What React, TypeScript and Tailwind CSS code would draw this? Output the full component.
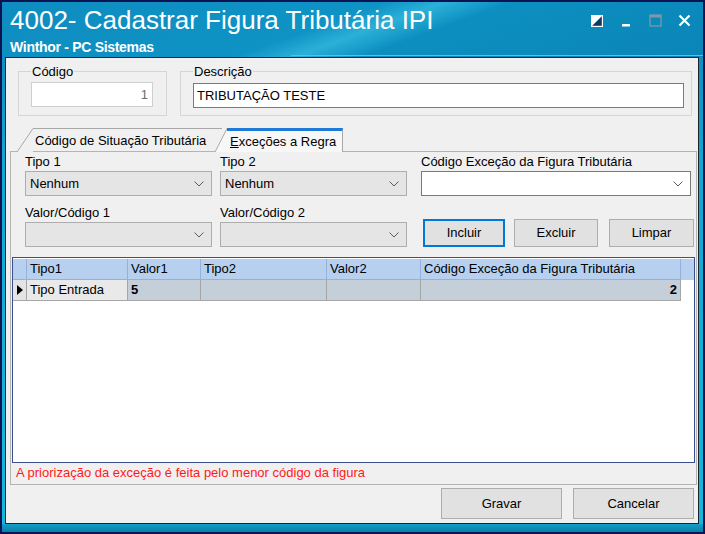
import React from "react";

const COLS = "grid grid-cols-[14px_101px_73px_126px_94px_260px]";

function Chevron() {
  return (
    <svg width="10" height="6" viewBox="0 0 10 6" className="shrink-0">
      <path d="M0.5 0.5 L5 5 L9.5 0.5" fill="none" stroke="#5a5a5a" strokeWidth="1" />
    </svg>
  );
}

function Combo({ value, white }: { value?: string; white?: boolean }) {
  return (
    <div
      className={
        white
          ? "h-[25px] flex items-center justify-between border border-[#7a7a7a] bg-white pl-[4px] pr-[7px]"
          : "h-[25px] flex items-center justify-between border border-[#adadad] bg-[#e5e5e5] pl-[4px] pr-[7px]"
      }
    >
      <span className="text-[13px] text-black">{value}</span>
      <Chevron />
    </div>
  );
}

function Field({ label, children }: { label: string; children: React.ReactNode }) {
  return (
    <div className="flex flex-col">
      <span className="text-[13px] leading-[15px] text-black mb-[2px]">{label}</span>
      {children}
    </div>
  );
}

function WinButton({ label, focused, className }: { label: React.ReactNode; focused?: boolean; className: string }) {
  return (
    <div
      className={
        (focused
          ? "border-2 border-[#0078d7] "
          : "border border-[#adadad] ") +
        "bg-[#e1e1e1] flex items-center justify-center text-[13px] text-black " +
        className
      }
    >
      {label}
    </div>
  );
}

function TitleIcons() {
  return (
    <div className="flex items-center pt-[9px]">
      <svg width="12" height="12" viewBox="0 0 12 12">
        <rect x="0.5" y="0.5" width="11" height="11" fill="#ffffff" />
        <path d="M11.5 0.5 L11.5 11.5 L0.5 11.5 Z" fill="#0d3a5e" />
        <rect x="0.5" y="0.5" width="11" height="11" fill="none" stroke="#ffffff" strokeWidth="1.4" />
      </svg>
      <svg width="10" height="12" viewBox="0 0 10 12" className="ml-[18px]">
        <rect x="1" y="9" width="8" height="2.5" fill="#ffffff" />
      </svg>
      <svg width="13" height="13" viewBox="0 0 13 13" className="ml-[18px]">
        <rect x="1" y="1" width="11" height="11" fill="none" stroke="#7d98ab" strokeWidth="1.3" />
        <rect x="1" y="1" width="11" height="2.5" fill="#7d98ab" />
      </svg>
      <svg width="13" height="13" viewBox="0 0 13 13" className="ml-[16px]">
        <path d="M1.5 1.5 L11.5 11.5 M11.5 1.5 L1.5 11.5" stroke="#ffffff" strokeWidth="2.2" />
      </svg>
    </div>
  );
}

export default function App() {
  return (
    <div className="w-[705px] h-[534px] border-2 border-[#0b1450] flex flex-col bg-[linear-gradient(180deg,#0c84b8_0%,#12a6d2_30%,#17b7dd_100%)] font-['Liberation_Sans',Arial,sans-serif] overflow-hidden">
      {/* title bar */}
      <div className="h-[55px] shrink-0 flex flex-col bg-[linear-gradient(160deg,#0f8cc0_0%,#0e93c5_45%,#2bb0d8_52%,#0c8fc0_60%,#0b85b8_100%)]">
        <div className="flex items-start justify-between pl-[8px] pr-[12px] pt-[3px]">
          <div className="flex flex-col">
            <span className="text-[26px] leading-[30px] text-white">4002- Cadastrar Figura Tributária IPI</span>
            <span className="text-[14px] leading-[16px] font-bold text-white mt-[4px] tracking-[-0.3px]">Winthor - PC Sistemas</span>
          </div>
          <TitleIcons />
        </div>
        <div className="mt-auto mb-[1px] ml-[289px] h-[2px] bg-[#f4961c]" />
      </div>

      {/* client */}
      <div className="h-[467px] shrink-0 ml-[3px] mr-[4px] border border-[#1c2430] bg-[#f0f0f0] flex flex-col">
        {/* header fields */}
        <div className="flex pt-[6px] pl-[12px] gap-[13px]">
          <fieldset className="w-[149px] h-[52px] border border-[#d5d5d5] px-[12px]">
            <legend className="text-[13px] leading-[15px] px-[1px] text-black">Código</legend>
            <div className="mt-[3px] h-[25px] w-[122px] border border-[#cfcfcf] bg-white flex items-center justify-end pr-[4px] text-[13px] text-[#6d6d6d]">
              1
            </div>
          </fieldset>
          <fieldset className="w-[512px] h-[52px] border border-[#d5d5d5] pl-[12px] pr-[7px]">
            <legend className="text-[13px] leading-[15px] px-[1px] text-black">Descrição</legend>
            <div className="mt-[4px] h-[25px] border border-[#7a7a7a] bg-white flex items-center pl-[3px] text-[13px] text-black">
              TRIBUTAÇÃO TESTE
            </div>
          </fieldset>
        </div>

        {/* tabs */}
        <div className="mt-[12px] ml-[4px] mr-[1px] flex flex-col">
          <div className="h-[24px] flex items-end relative z-10 -mb-[1px]">
            <div className="flex items-end h-[24px] ml-[7px]">
              <svg width="16" height="24" viewBox="0 0 16 24" className="shrink-0">
                <path d="M0 24 L16 0.5 L16 24 Z" fill="#f0f0f0" />
                <path d="M0 24 L16 0.5" stroke="#a8a8a8" strokeWidth="1" fill="none" />
              </svg>
              <div className="h-[24px] w-[189px] border-t border-[#a8a8a8] flex items-center text-[13px] text-black pl-[2px]">
                Código de Situação Tributária
              </div>
            </div>
            <div className="flex items-end h-[24px] -ml-[7px]">
              <svg width="12" height="24" viewBox="0 0 12 24" className="shrink-0">
                <path d="M0 24 L12 0 L12 24 Z" fill="#f7f7f7" />
                <path d="M0 24 L12 0.5" stroke="#a8a8a8" strokeWidth="1" fill="none" />
              </svg>
              <div className="h-[24px] w-[116px] border-t-[3px] border-t-[#1e7ad6] border-r border-r-[#a8a8a8] bg-[#f7f7f7] flex items-center text-[13px] text-black pl-[3px]">
                <span>
                  <span className="underline">E</span>xceções a Regra
                </span>
              </div>
            </div>
          </div>

          {/* panel */}
          <div className="h-[334px] border border-[#b4b4b4] bg-[#f0f0f0] flex flex-col">
            <div className="flex pl-[14px] pt-[2px]">
              <div className="w-[187px] flex flex-col">
                <Field label="Tipo 1">
                  <Combo value="Nenhum" />
                </Field>
                <div className="mt-[9px]">
                  <Field label="Valor/Código 1">
                    <Combo />
                  </Field>
                </div>
              </div>
              <div className="w-[187px] ml-[8px] flex flex-col">
                <Field label="Tipo 2">
                  <Combo value="Nenhum" />
                </Field>
                <div className="mt-[9px]">
                  <Field label="Valor/Código 2">
                    <Combo />
                  </Field>
                </div>
              </div>
              <div className="w-[273px] ml-[14px] flex flex-col">
                <div className="w-[270px]">
                  <Field label="Código Exceção da Figura Tributária">
                    <Combo white />
                  </Field>
                </div>
                <div className="flex mt-[23px] ml-[2px]">
                  <WinButton focused label="Incluir" className="w-[82px] h-[28px]" />
                  <WinButton label="Excluir" className="w-[84px] h-[28px] ml-[9px]" />
                  <WinButton label="Limpar" className="w-[85px] h-[28px] ml-[11px]" />
                </div>
              </div>
            </div>

            {/* data grid */}
            <div className="mt-[10px] ml-[1px] mr-[1px] h-[206px] border border-[#3b4f8c] bg-white flex flex-col pt-[1px]">
              <div className={COLS + " h-[21px] bg-[#b7d0f0] text-[13px] text-black"}>
                <div className="border-r border-b border-[#93b1da]" />
                <div className="border-r border-b border-[#93b1da] pl-[3px] flex items-center">Tipo1</div>
                <div className="border-r border-b border-[#93b1da] pl-[3px] flex items-center">Valor1</div>
                <div className="border-r border-b border-[#93b1da] pl-[3px] flex items-center">Tipo2</div>
                <div className="border-r border-b border-[#93b1da] pl-[3px] flex items-center">Valor2</div>
                <div className="border-r border-b border-[#93b1da] pl-[3px] flex items-center">Código Exceção da Figura Tributária</div>
              </div>
              <div className={COLS + " h-[21px] text-[13px] text-black"}>
                <div className="bg-[#e4e4e4] border-r border-b border-[#a6a6a6] flex items-center justify-center">
                  <svg width="6" height="10" viewBox="0 0 6 10">
                    <path d="M0 0 L6 5 L0 10 Z" fill="#000000" />
                  </svg>
                </div>
                <div className="bg-[#e9e9e9] border-r border-b border-[#a6a6a6] pl-[3px] flex items-center">Tipo Entrada</div>
                <div className="bg-[#c5cfda] border-r border-b border-[#a6a6a6] pl-[3px] flex items-center font-bold">5</div>
                <div className="bg-[#c5cfda] border-r border-b border-[#a6a6a6]" />
                <div className="bg-[#c5cfda] border-r border-b border-[#a6a6a6]" />
                <div className="bg-[#c5cfda] border-r border-b border-[#a6a6a6] pr-[3px] flex items-center justify-end font-bold">2</div>
              </div>
            </div>

            <div className="pl-[5px] pt-[2px] text-[13px] leading-[16px] text-[#ff1a1a]">
              A priorização da exceção é feita pelo menor código da figura
            </div>
          </div>
        </div>

        {/* footer buttons */}
        <div className="mt-auto flex justify-end gap-[11px] pr-[4px] pb-[4px]">
          <WinButton label="Gravar" className="w-[121px] h-[31px]" />
          <WinButton label="Cancelar" className="w-[121px] h-[31px]" />
        </div>
      </div>

      <div className="flex-1 bg-[linear-gradient(180deg,#139fc8,#0b7fa8)]" />
    </div>
  );
}
